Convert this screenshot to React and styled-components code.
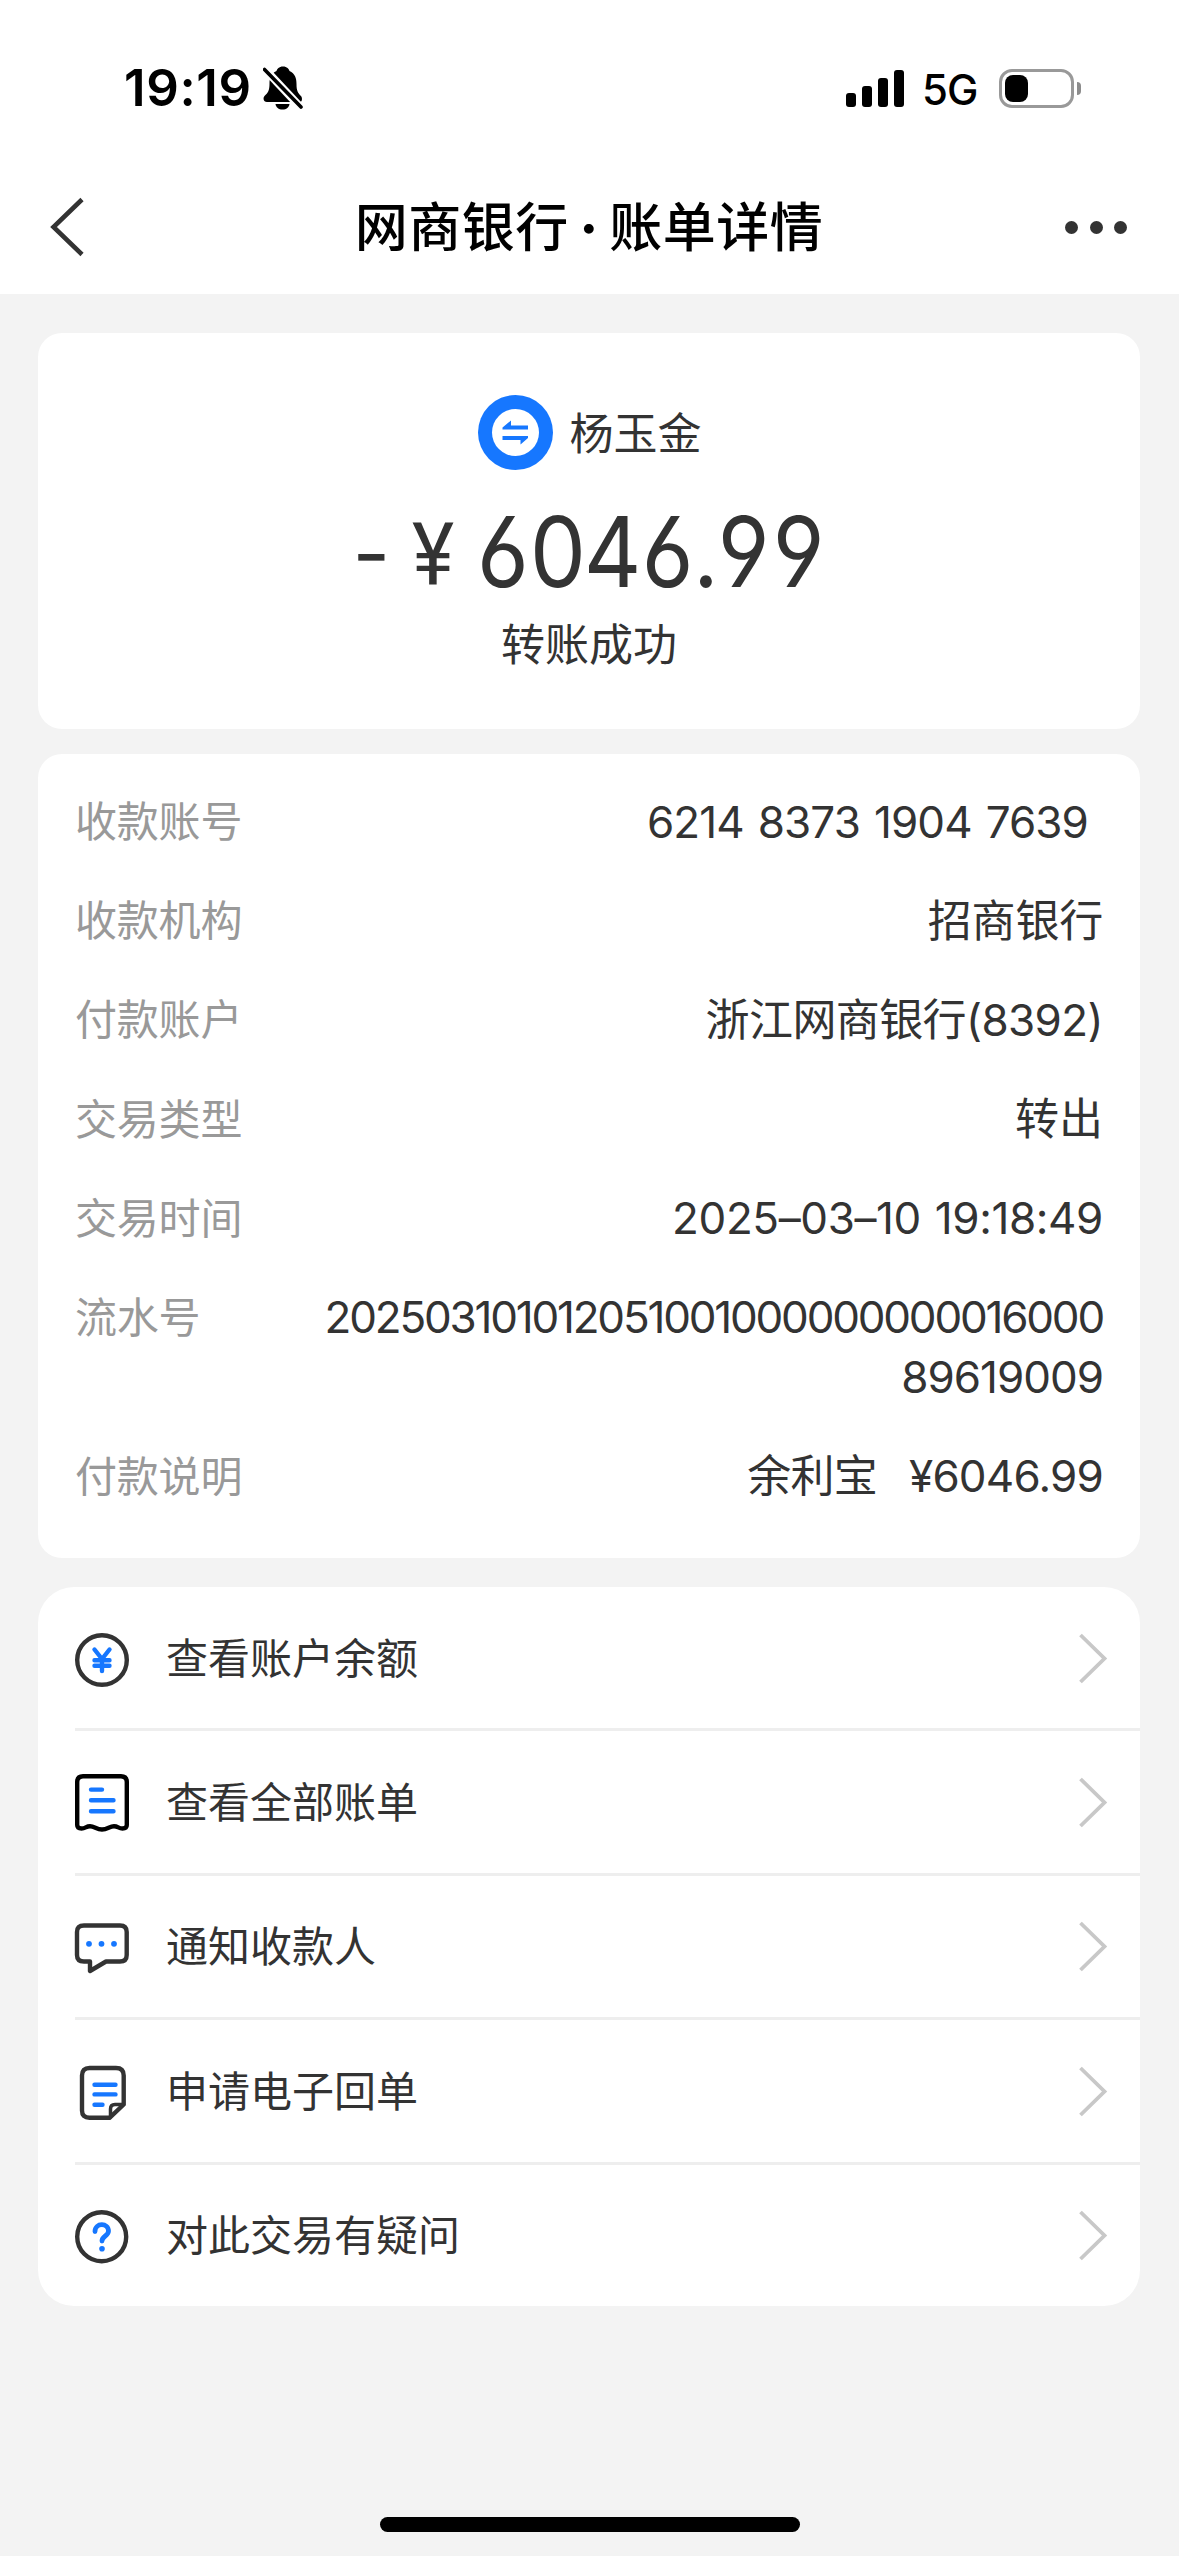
import React from "react";
import styled, { createGlobalStyle } from "styled-components";

const GlobalStyle = createGlobalStyle`
  * { box-sizing: border-box; }
  html, body { margin: 0; padding: 0; background: #f3f3f3; }
  body {
    font-family: Inter, "Noto Sans CJK SC", sans-serif;
    color: #333;
    -webkit-font-smoothing: antialiased;
  }
`;

const Screen = styled.div`
  width: 1179px;
  height: 2556px;
  display: flex;
  flex-direction: column;
  background: #f3f3f3;
  overflow: hidden;
`;

const Header = styled.header`
  flex: none;
  height: 294px;
  background: #fff;
`;

const StatusBar = styled.div`
  height: 160px;
  padding: 16px 98px 0 124px;
  display: flex;
  align-items: center;
  justify-content: space-between;
  color: #000;
`;

const StatusGroup = styled.div`
  display: flex;
  align-items: center;
`;

const Clock = styled.span`
  width: 139px;
  font-size: 51px;
  line-height: 60px;
  font-weight: 600;
  letter-spacing: 0.6px;
  white-space: nowrap;
`;

const Signal = styled.div`
  display: flex;
  align-items: flex-end;
  gap: 6px;
  height: 37px;
`;

const SignalBar = styled.span`
  width: 10px;
  height: ${(p) => p.$height}px;
  border-radius: 3px;
  background: #000;
`;

const Network = styled.span`
  width: 76px;
  margin-right: 19px;
  padding: 3px 0 0 18px;
  font-size: 42px;
  line-height: 50px;
  font-weight: 450;
  letter-spacing: -0.9px;
  white-space: nowrap;
`;

const Battery = styled.div`
  width: 75px;
  height: 39px;
  padding: 3px;
  border: 3px solid #999;
  border-radius: 13px;
`;

const BatteryLevel = styled.div`
  width: 23px;
  height: 27px;
  border-radius: 8px;
  background: #000;
`;

const BatteryTip = styled.div`
  width: 4px;
  height: 13px;
  margin-left: 3px;
  border-radius: 0 4px 4px 0;
  background: #8c8c8c;
`;

const NavBar = styled.nav`
  height: 134px;
  padding: 0 52px 0 48px;
  display: grid;
  grid-template-columns: 120px 1fr 116px;
  align-items: center;
`;

const Title = styled.h1`
  margin: 0;
  padding: 2px 1px 0 0;
  text-align: center;
  font-size: 53px;
  line-height: 70px;
  font-weight: 500;
  letter-spacing: 0.5px;
  color: #000;
  white-space: nowrap;
`;

const Separator = styled.span`
  font-weight: 800;
  word-spacing: -1.5px;
`;

const More = styled.div`
  display: flex;
  justify-content: flex-end;
  gap: 11.5px;
`;

const Dot = styled.span`
  width: 13px;
  height: 13px;
  border-radius: 50%;
  background: #333;
`;

const Content = styled.main`
  flex: 1;
  padding: 39px 39px 0 38px;
`;

const SummaryCard = styled.section`
  height: 396px;
  padding-top: 62px;
  border-radius: 24px;
  background: #fff;
  display: flex;
  flex-direction: column;
  align-items: center;
`;

const Payee = styled.div`
  display: flex;
  align-items: center;
  gap: 17px;
  height: 75px;
  padding-left: 1px;
  font-size: 44px;
  line-height: 60px;
`;

const PayeeName = styled.span`
  padding-top: 2px;
`;

const Amount = styled.div`
  display: flex;
  align-items: baseline;
  width: 473px;
  margin-top: 22px;
  height: 123px;
  line-height: 120px;
  white-space: nowrap;
`;

const Minus = styled.span`
  width: 59px;
  font-size: 82px;
  font-feature-settings: "case";
`;

const Currency = styled.span`
  width: 62px;
  font-family: Roboto, sans-serif;
  font-size: 88px;
  line-height: 114px;
  transform: translateY(-2px) scaleX(0.91);
  transform-origin: 0 50%;
`;

const Digits = styled.span`
  width: 352px;
  font-size: 97px;
  font-weight: 440;
  letter-spacing: -3.2px;
  font-feature-settings: "cv03", "cv04", "tnum";
  transform: scaleX(0.92);
  transform-origin: 0 50%;
`;

const Status = styled.div`
  font-size: 44px;
  line-height: 60px;
`;

const DetailCard = styled.dl`
  margin: 25px 0 0;
  padding: 37px 37px 51px;
  height: 804px;
  border-radius: 24px;
  background: #fff;
  display: flex;
  flex-direction: column;
  gap: 39.2px;
`;

const DetailRow = styled.div`
  display: flex;
  justify-content: space-between;
  line-height: 60px;
`;

const DetailLabel = styled.dt`
  padding-top: 1px;
  margin-bottom: -1px;
  font-size: 42px;
  letter-spacing: -0.2px;
  color: #999;
  white-space: nowrap;
`;

const DetailValue = styled.dd`
  margin: 0 0 -1px;
  padding-top: 0.5px;
  padding-right: ${(p) => p.$inset || 0}px;
  font-size: 44px;
  text-align: right;
  white-space: pre;
`;

const ValueLine = styled.div`
  letter-spacing: ${(p) => p.$tracking || 0}px;
  word-spacing: ${(p) => p.$words || 0}px;
`;

const ActionCard = styled.section`
  margin-top: 29px;
  height: 719px;
  border-radius: 36px;
  background: #fff;
  overflow: hidden;
`;

const ActionRow = styled.div`
  height: ${(p) => (p.$last ? 141.4 : 144.4)}px;
  margin-left: 37px;
  padding-right: 32px;
  border-bottom: ${(p) => (p.$last ? "0" : "3px solid #eee")};
  display: flex;
  align-items: center;
`;

const ActionIcon = styled.svg`
  flex: none;
  width: 60px;
  height: 60px;
  margin-left: -3px;
  fill: none;
  stroke: #333;
  stroke-width: 4.4;
  stroke-linecap: round;
  stroke-linejoin: round;
`;

const ActionText = styled.span`
  flex: 1;
  margin-left: 34px;
  padding-top: 2px;
  font-size: 42px;
  line-height: 60px;
`;

const HomeArea = styled.footer`
  height: 39px;
  display: flex;
  justify-content: center;
`;

const HomeIndicator = styled.div`
  width: 420px;
  height: 15px;
  border-radius: 8px;
  background: #000;
`;

const BLUE = "#1677ff";

const BellOff = () => (
  <svg width="40" height="44" viewBox="0 0 40 44">
    <path d="M20 0.5C24 0.5 26 3 26.5 5C32 7.5 33.5 12 33.5 18C33.5 25 35 27 38 30C39.4 31.6 39.5 36 37 36H4C0 36 0 31.6 1.5 30C5 27 6.500 24 6.500 18C6.500 12 8 7.500 13.500 5C14 3 16 0.500 20 0.500Z" fill="#000" />
    <path d="M12.500 38H26.500C26 41.500 23.500 43.500 19.500 43.500C15.500 43.500 13 41.500 12.500 38Z" fill="#000" />
    <path d="M-2 -1L41 45" stroke="#fff" strokeWidth="8" />
    <path d="M1.500 3.500L38 41" stroke="#000" strokeWidth="3.600" strokeLinecap="round" />
  </svg>
);

const BackIcon = () => (
  <svg width="40" height="60" viewBox="0 0 40 60" fill="none">
    <path d="M34 2.500L5.500 30L34 57.500" stroke="#333" strokeWidth="4.600" />
  </svg>
);

const TransferBadge = () => (
  <svg width="75" height="75" viewBox="0 0 75 75">
    <circle cx="37.500" cy="37.500" r="37.500" fill={BLUE} />
    <circle cx="37.500" cy="37.500" r="23.500" fill="#fff" />
    <path d="M24.500 34.500V32.500L33 25.500V30.500H50V34.500Z" fill={BLUE} />
    <path d="M50 41V43L42.500 49.500V45H24.500V41Z" fill={BLUE} />
  </svg>
);

const Chevron = () => (
  <svg width="30" height="52" viewBox="0 0 30 52" fill="none">
    <path d="M2.500 3L26.500 26.500L2.500 50" stroke="#c8c8c8" strokeWidth="3.800" />
  </svg>
);

const icons = {
  yen: (
    <>
      <circle cx="30" cy="32" r="24.800" />
      <path d="M22.500 21.500L30 31L37.500 21.500M30 31V43M22.500 32.200H37.500M22.500 37.700H37.500" stroke={BLUE} />
    </>
  ),
  bill: (
    <>
      <path
        d="M5.200 53V10Q5.200 4.200 11 4.200H49Q54.800 4.200 54.800 10V53Q54.800 56.500 50.500 56.500C46.500 56.500 46 54.200 42 54.200C37.500 54.200 35.500 57.500 30 57.500C24.500 57.500 22.500 54.200 18 54.200C14 54.200 13.500 56.500 9.500 56.500Q5.200 56.500 5.200 53Z"
        stroke="#000"
      />
      <path d="M19 17.600H30M19 28.300H41.500M19 39.200H41.500" stroke={BLUE} />
    </>
  ),
  message: (
    <>
      <path d="M12 9.500H48Q54.700 9.500 54.700 16V39Q54.700 45.500 48 45.500H34L18 55V45.500H12Q5 45.500 5 39V16Q5 9.500 12 9.500Z" />
      <g fill={BLUE} stroke="none">
        <circle cx="17" cy="27.800" r="2.900" />
        <circle cx="29.500" cy="27.800" r="2.900" />
        <circle cx="42" cy="27.800" r="2.900" />
      </g>
    </>
  ),
  receipt: (
    <>
      <path d="M17.500 7H44Q51.700 7 51.700 14.500V43.500L37.500 56.800H17.500Q10 56.800 10 49.500V14.500Q10 7 17.500 7Z" />
      <path d="M51.500 43.500H43Q38.500 43.500 38.500 48V56" strokeWidth="3.500" />
      <path d="M22.500 23.700H43.500M22.500 33.400H43.500M22.500 43.700H30.500" stroke={BLUE} />
    </>
  ),
  question: (
    <>
      <circle cx="29.700" cy="31.700" r="24.500" />
      <path d="M23 26.500C23 17.500 36.500 17.500 36.500 26C36.500 31 30 31 30 36" stroke={BLUE} strokeWidth="4.800" />
      <circle cx="30" cy="43.700" r="2.800" fill={BLUE} stroke="none" />
    </>
  ),
};

const details = [
  { label: "收款账号", inset: 15, lines: [{ text: "6214 8373 1904 7639", tracking: -0.9, words: 2.5 }] },
  { label: "收款机构", lines: [{ text: "招商银行", tracking: -0.2 }] },
  { label: "付款账户", lines: [{ text: "浙江网商银行(8392)", tracking: -0.6 }] },
  { label: "交易类型", lines: [{ text: "转出" }] },
  { label: "交易时间", lines: [{ text: "2025–03–10 19:18:49", tracking: -0.4, words: 2 }] },
  {
    label: "流水号",
    lines: [
      { text: "202503101012051001000000000016000", tracking: -2.2 },
      { text: "89619009", tracking: -1 },
    ],
  },
  { label: "付款说明", lines: [{ text: "余利宝  ¥6046.99", tracking: -0.8, words: 4.5 }] },
];

const actions = [
  { icon: "yen", text: "查看账户余额" },
  { icon: "bill", text: "查看全部账单" },
  { icon: "message", text: "通知收款人" },
  { icon: "receipt", text: "申请电子回单" },
  { icon: "question", text: "对此交易有疑问" },
];

export default function App() {
  return (
    <Screen>
      <GlobalStyle />
      <Header>
        <StatusBar>
          <StatusGroup>
            <Clock>19:19</Clock>
            <BellOff />
          </StatusGroup>
          <StatusGroup>
            <Signal>
              {[14, 21, 29, 37].map((h) => (
                <SignalBar key={h} $height={h} />
              ))}
            </Signal>
            <Network>5G</Network>
            <Battery>
              <BatteryLevel />
            </Battery>
            <BatteryTip />
          </StatusGroup>
        </StatusBar>
        <NavBar>
          <BackIcon />
          <Title>
            网商银行<Separator> · </Separator>账单详情
          </Title>
          <More>
            <Dot />
            <Dot />
            <Dot />
          </More>
        </NavBar>
      </Header>
      <Content>
        <SummaryCard>
          <Payee>
            <TransferBadge />
            <PayeeName>杨玉金</PayeeName>
          </Payee>
          <Amount>
            <Minus>-</Minus>
            <Currency>¥</Currency>
            <Digits>6046.99</Digits>
          </Amount>
          <Status>转账成功</Status>
        </SummaryCard>
        <DetailCard>
          {details.map((d) => (
            <DetailRow key={d.label}>
              <DetailLabel>{d.label}</DetailLabel>
              <DetailValue $inset={d.inset}>
                {d.lines.map((l) => (
                  <ValueLine key={l.text} $tracking={l.tracking} $words={l.words}>
                    {l.text}
                  </ValueLine>
                ))}
              </DetailValue>
            </DetailRow>
          ))}
        </DetailCard>
        <ActionCard>
          {actions.map((a, i) => (
            <ActionRow key={a.icon} $last={i === actions.length - 1}>
              <ActionIcon viewBox="0 0 60 60">{icons[a.icon]}</ActionIcon>
              <ActionText>{a.text}</ActionText>
              <Chevron />
            </ActionRow>
          ))}
        </ActionCard>
      </Content>
      <HomeArea>
        <HomeIndicator />
      </HomeArea>
    </Screen>
  );
}
